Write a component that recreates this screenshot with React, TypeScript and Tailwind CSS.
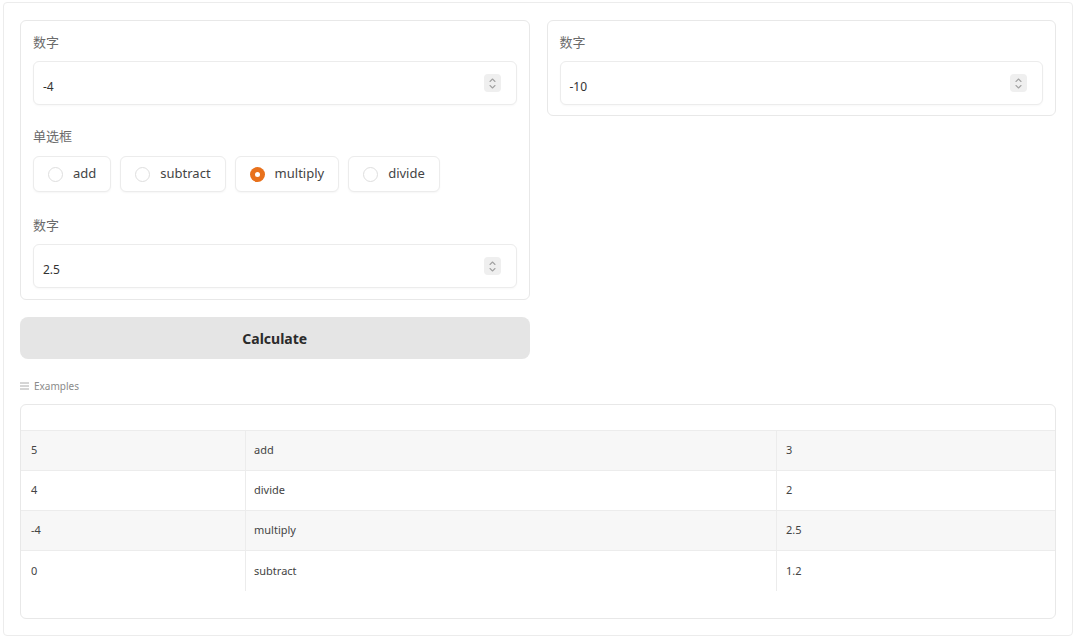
import React from "react"

const font = { fontFamily: '"Noto Sans", "Noto Sans CJK SC", sans-serif' }

function Spinner() {
  return (
    <div className="flex h-[18px] w-[17px] items-center justify-center rounded-sm bg-[#efefef]">
      <svg width="9" height="13" viewBox="0 0 9 13" fill="none" stroke="#a3a3a3" strokeWidth="1.1" strokeLinecap="round" strokeLinejoin="round">
        <path d="M2 4.5 L4.5 2 L7 4.5" />
        <path d="M2 8.5 L4.5 11 L7 8.5" />
      </svg>
    </div>
  )
}

function NumberField({ label, value }: { label: string; value: string }) {
  return (
    <div>
      <div className="mb-[9px] text-[13px] leading-[20px] text-[#6b6b6b]">{label}</div>
      <div className="flex h-[44px] items-center justify-between rounded-md border border-[#ececec] bg-white pl-[9px] pr-[15px] shadow-[0_1px_2px_rgba(0,0,0,0.03)]">
        <span className="pt-[8px] text-[12px] leading-[16px] text-[#333]">{value}</span>
        <Spinner />
      </div>
    </div>
  )
}

function Radio({ label, checked }: { label: string; checked?: boolean }) {
  return (
    <div className="flex h-[36px] items-center gap-[10px] rounded-md border border-[#ececec] bg-white px-[14px] shadow-[0_1px_2px_rgba(0,0,0,0.04)]">
      {checked ? (
        <span className="flex h-[15px] w-[15px] items-center justify-center rounded-full bg-[#e8711c]">
          <span className="h-[5px] w-[5px] rounded-full bg-white" />
        </span>
      ) : (
        <span className="h-[15px] w-[15px] rounded-full border border-[#dedede] bg-white" />
      )}
      <span className="text-[13px] text-[#444]">{label}</span>
    </div>
  )
}

const rows = [
  ["5", "add", "3"],
  ["4", "divide", "2"],
  ["-4", "multiply", "2.5"],
  ["0", "subtract", "1.2"],
]

export default function App() {
  return (
    <div className="h-[638px] w-[1077px] bg-white pl-[3px] pt-[2px]" style={font}>
      <div className="h-[634px] w-[1070px] rounded-sm border border-[#ececec] px-[16px] pt-[17px]">
        <div className="grid grid-cols-2 items-start gap-x-[17px]">
          <div>
            <div className="rounded-md border border-[#e8e8e8] px-[12px] pb-[11px] pt-[11px]">
              <NumberField label="数字" value="-4" />
              <div className="mb-[10px] mt-[21px] text-[13px] leading-[20px] text-[#6b6b6b]">单选框</div>
              <div className="flex gap-[9px]">
                <Radio label="add" />
                <Radio label="subtract" />
                <Radio label="multiply" checked />
                <Radio label="divide" />
              </div>
              <div className="mt-[23px]">
                <NumberField label="数字" value="2.5" />
              </div>
            </div>
            <button className="mt-[17px] flex h-[42px] w-full items-center justify-center rounded-lg bg-[#e5e5e5] text-[14px] font-bold text-[#2b2b2b]">
              Calculate
            </button>
          </div>
          <div className="rounded-md border border-[#e8e8e8] px-[12px] pb-[10px] pt-[11px]">
            <NumberField label="数字" value="-10" />
          </div>
        </div>

        <div className="mt-[20px] flex items-center gap-[5px] text-[10px] leading-[14px] text-[#8a8a8a]">
          <svg width="9" height="8" viewBox="0 0 9 8" stroke="#a3a3a3" strokeWidth="0.9">
            <path d="M0 1 H9 M0 4 H9 M0 7 H9" />
          </svg>
          <span>Examples</span>
        </div>

        <div className="mt-[11px] h-[215px] overflow-hidden rounded-md border border-[#e8e8e8] text-[11px] text-[#444]">
          <div className="h-[26px] border-b border-[#ececec]" />
          {rows.map((r, i) => (
            <div
              key={i}
              className={`grid h-[40px] grid-cols-[225px_531px_1fr] items-center ${i % 2 === 0 ? "bg-[#f7f7f7]" : "bg-white"} ${i < rows.length - 1 ? "border-b border-[#ececec]" : ""}`}
            >
              <div className="flex h-full items-center border-r border-[#ececec] pl-[10px]">{r[0]}</div>
              <div className="flex h-full items-center border-r border-[#ececec] pl-[8px]">{r[1]}</div>
              <div className="flex h-full items-center pl-[9px]">{r[2]}</div>
            </div>
          ))}
        </div>
      </div>
    </div>
  )
}
